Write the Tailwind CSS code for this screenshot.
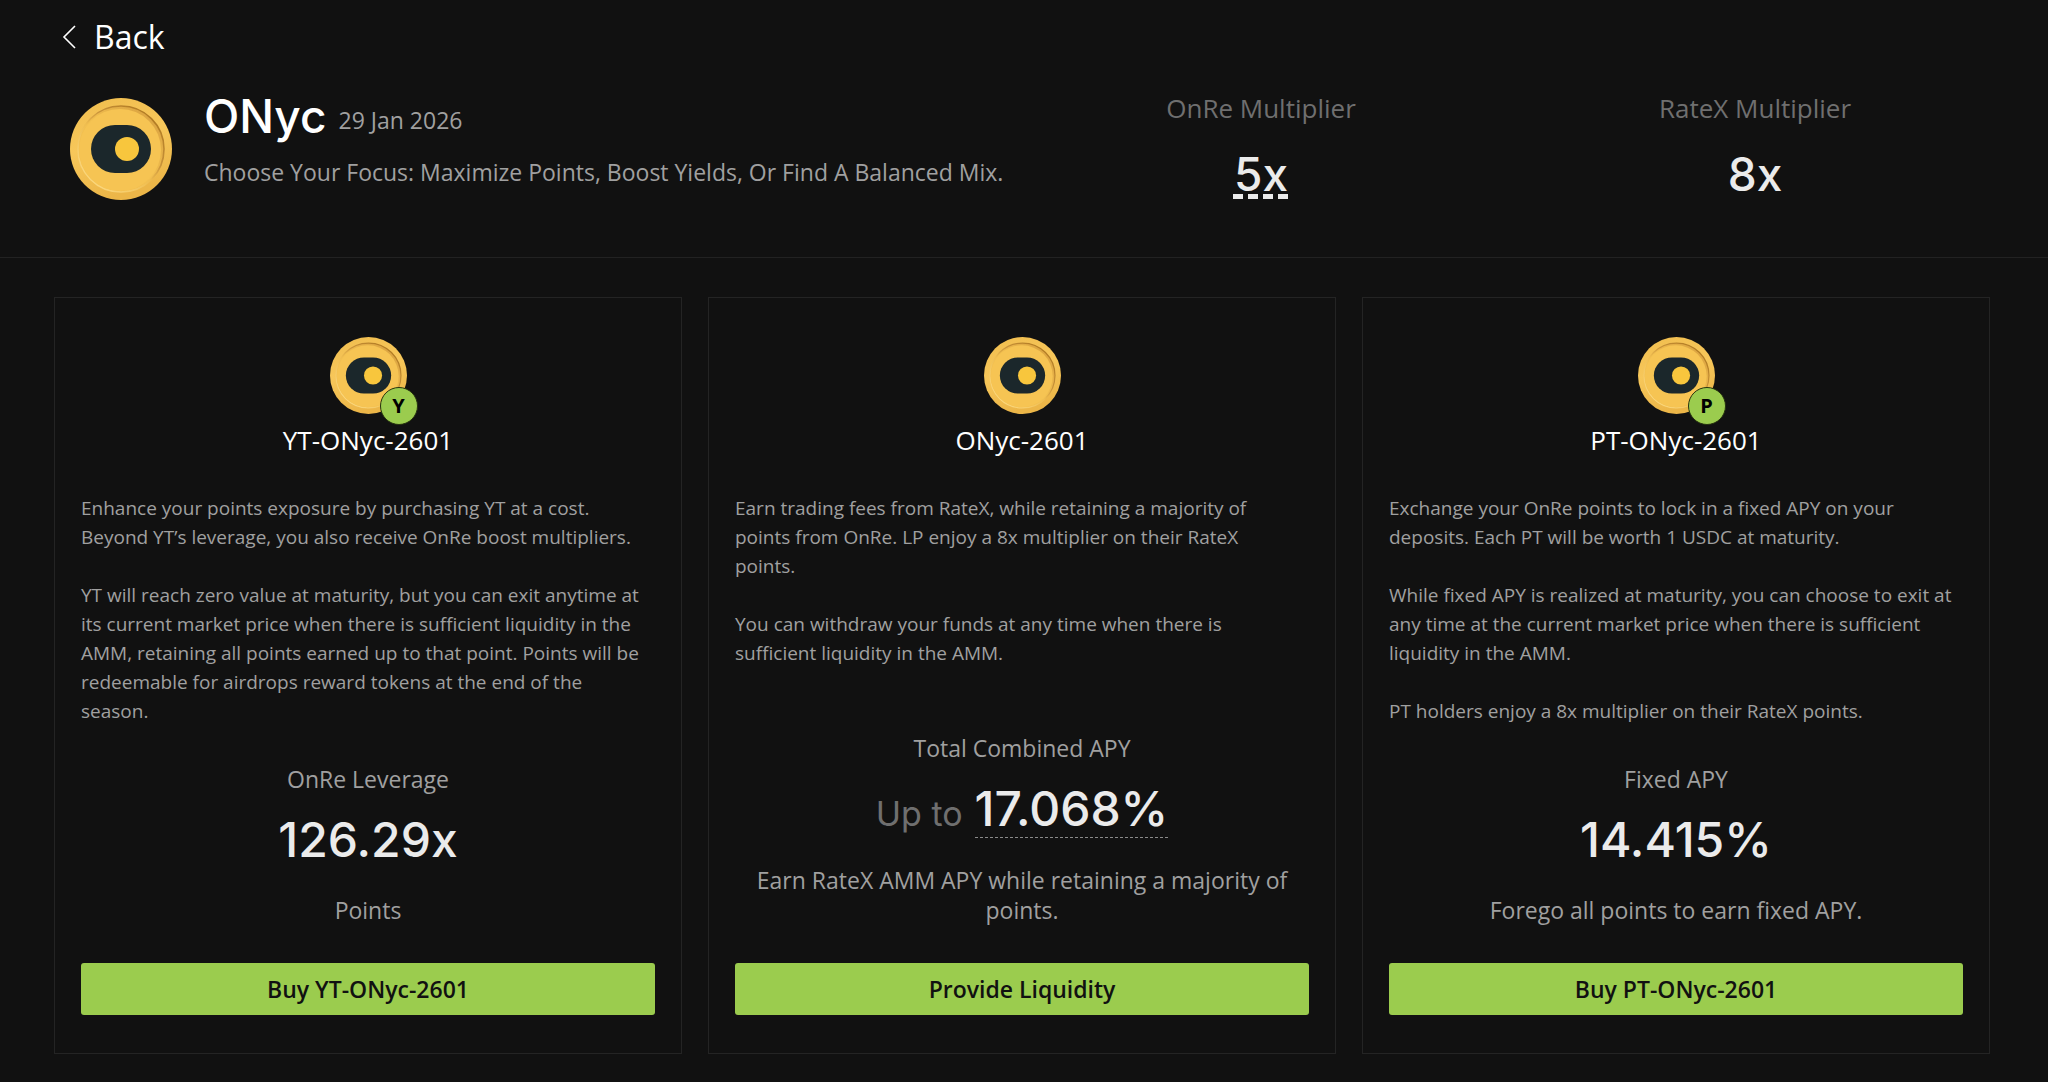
<!DOCTYPE html>
<html lang="en">
<head>
<meta charset="utf-8">
<meta name="viewport" content="width=device-width, initial-scale=1">
<title>ONyc</title>
<script src="https://cdn.jsdelivr.net/npm/@tailwindcss/browser@4"></script>
</head>
<body class="flex min-h-screen flex-col bg-[#111111] font-['Open_Sans','Noto_Sans',sans-serif] text-[#a0a0a0]">
<svg class="absolute h-0 w-0" aria-hidden="true">
  <defs>
    <linearGradient id="rim" x1="0" y1="0" x2="0.3" y2="1"><stop offset="0" stop-color="#f0bd4e"/><stop offset="0.5" stop-color="#f7c75a"/><stop offset="1" stop-color="#ecb648"/></linearGradient>
    <linearGradient id="groove" x1="0.85" y1="0.1" x2="0.15" y2="0.9"><stop offset="0" stop-color="#b07a22"/><stop offset="0.35" stop-color="#c8923a"/><stop offset="0.55" stop-color="#efbd50"/><stop offset="1" stop-color="#fbd87e"/></linearGradient>
    <linearGradient id="shade" x1="0.85" y1="0.1" x2="0.15" y2="0.9"><stop offset="0" stop-color="#dba442"/><stop offset="0.5" stop-color="#f2c050"/><stop offset="1" stop-color="#f3bd4c"/></linearGradient>
    <symbol id="coin" viewBox="0 0 102 102">
      <circle cx="51" cy="51" r="51" fill="url(#rim)"/>
      <circle cx="51" cy="51" r="43" fill="url(#shade)" stroke="url(#groove)" stroke-width="1.6"/>
      <circle cx="50" cy="52" r="41" fill="#f6c453"/>
      <rect x="21" y="27" width="60" height="48" rx="24" fill="#1b272b"/>
      <circle cx="57" cy="51" r="12" fill="#f8c63d"/>
    </symbol>
  </defs>
</svg>

<header class="border-b border-[#222222] pr-[46px] pb-[55px] pl-[54px]">
  <a href="#" class="inline-flex items-center gap-4 pt-4 pl-2 text-[32px] leading-[42px] text-white">
    <svg class="h-6 w-4" viewBox="0 0 16 24" fill="none" stroke="currentColor" stroke-width="1.6"><path d="M13 1 2 12l11 11"/></svg>
    Back
  </a>
  <div class="grid grid-cols-[960fr_494fr_494fr] pt-8">
    <div class="flex gap-8 pt-1 pl-4">
      <svg class="mt-1 h-[102px] w-[102px] shrink-0" role="img" aria-label="ONyc"><use href="#coin"/></svg>
      <div>
        <div class="flex items-start gap-3">
          <h1 class="font-['Inter',sans-serif] text-[46px] leading-[44px] font-medium text-white">ONyc</h1>
          <span class="text-[23px] leading-[52px]">29 Jan 2026</span>
        </div>
        <p class="mt-1.5 text-[23px] leading-10">Choose Your Focus: Maximize Points, Boost Yields, Or Find A Balanced Mix.</p>
      </div>
    </div>
    <div class="text-center">
      <div class="text-[26px] leading-9 text-[#6f6f6f]">OnRe Multiplier</div>
      <div class="mt-5 font-['Inter',sans-serif] text-[46px] leading-[56px] font-medium text-[#ebebeb] underline decoration-dashed decoration-[5px] underline-offset-[3px]">5x</div>
    </div>
    <div class="text-center">
      <div class="text-[26px] leading-9 text-[#6f6f6f]">RateX Multiplier</div>
      <div class="mt-5 font-['Inter',sans-serif] text-[46px] leading-[56px] font-medium text-[#ebebeb]">8x</div>
    </div>
  </div>
</header>

<main class="grid flex-1 grid-cols-3 gap-[26px] pt-[39px] pr-[58px] pb-7 pl-[54px]">
  <section class="flex flex-col border border-[#242424] px-[26px] pt-[39px] pb-[38px]">
    <div class="relative mx-auto h-[77px] w-[77px]">
      <svg class="h-full w-full" aria-hidden="true"><use href="#coin"/></svg>
      <span class="absolute -right-[11px] -bottom-[11px] flex h-[38px] w-[38px] items-center justify-center rounded-full border border-[#26330f] bg-[#9bcc4e] text-[20px] font-bold text-black">Y</span>
    </div>
    <h2 class="mt-1.5 text-center text-[26px] leading-10 text-white">YT-ONyc-2601</h2>
    <div class="mt-[34px] space-y-[29px] pr-2 text-[19px] leading-[29px]">
      <p>Enhance your points exposure by purchasing YT at a cost. Beyond YT’s leverage, you also receive OnRe boost multipliers.</p>
      <p>YT will reach zero value at maturity, but you can exit anytime at its current market price when there is sufficient liquidity in the AMM, retaining all points earned up to that point. Points will be redeemable for airdrops reward tokens at the end of the season.</p>
    </div>
    <div class="mt-auto pt-6 text-center text-[23px] leading-[30px]">
      <div>OnRe Leverage</div>
      <div class="mt-[18px] font-['Inter',sans-serif] text-[48px] leading-[56px] font-medium text-[#ebebeb]">126.29x</div>
      <div class="mt-[27px]">Points</div>
    </div>
    <button type="button" class="mt-[38px] h-[52px] w-full rounded-[3px] bg-[#9bcc4e] text-[23px] font-semibold text-[#111111]">Buy YT-ONyc-2601</button>
  </section>

  <section class="flex flex-col border border-[#242424] px-[26px] pt-[39px] pb-[38px]">
    <div class="relative mx-auto h-[77px] w-[77px]">
      <svg class="h-full w-full" aria-hidden="true"><use href="#coin"/></svg>
    </div>
    <h2 class="mt-1.5 text-center text-[26px] leading-10 text-white">ONyc-2601</h2>
    <div class="mt-[34px] space-y-[29px] pr-2 text-[19px] leading-[29px]">
      <p>Earn trading fees from RateX, while retaining a majority of points from OnRe. LP enjoy a 8x multiplier on their RateX points.</p>
      <p>You can withdraw your funds at any time when there is sufficient liquidity in the AMM.</p>
    </div>
    <div class="mt-auto pt-6 text-center text-[23px] leading-[30px]">
      <div>Total Combined APY</div>
      <div class="mt-[18px] flex items-baseline justify-center gap-3 font-['Inter',sans-serif]">
        <span class="text-[34px] text-[#6f6f6f]">Up to</span>
        <span class="border-b border-dashed border-[#8a8a8a] text-[48px] leading-[56px] font-medium text-[#ebebeb]">17.068%</span>
      </div>
      <div class="mt-[27px]">Earn RateX AMM APY while retaining a majority of points.</div>
    </div>
    <button type="button" class="mt-[38px] h-[52px] w-full rounded-[3px] bg-[#9bcc4e] text-[23px] font-semibold text-[#111111]">Provide Liquidity</button>
  </section>

  <section class="flex flex-col border border-[#242424] px-[26px] pt-[39px] pb-[38px]">
    <div class="relative mx-auto h-[77px] w-[77px]">
      <svg class="h-full w-full" aria-hidden="true"><use href="#coin"/></svg>
      <span class="absolute -right-[11px] -bottom-[11px] flex h-[38px] w-[38px] items-center justify-center rounded-full border border-[#26330f] bg-[#9bcc4e] text-[20px] font-bold text-black">P</span>
    </div>
    <h2 class="mt-1.5 text-center text-[26px] leading-10 text-white">PT-ONyc-2601</h2>
    <div class="mt-[34px] space-y-[29px] pr-2 text-[19px] leading-[29px]">
      <p>Exchange your OnRe points to lock in a fixed APY on your deposits. Each PT will be worth 1 USDC at maturity.</p>
      <p>While fixed APY is realized at maturity, you can choose to exit at any time at the current market price when there is sufficient liquidity in the AMM.</p>
      <p>PT holders enjoy a 8x multiplier on their RateX points.</p>
    </div>
    <div class="mt-auto pt-6 text-center text-[23px] leading-[30px]">
      <div>Fixed APY</div>
      <div class="mt-[18px] font-['Inter',sans-serif] text-[48px] leading-[56px] font-medium text-[#ebebeb]">14.415%</div>
      <div class="mt-[27px]">Forego all points to earn fixed APY.</div>
    </div>
    <button type="button" class="mt-[38px] h-[52px] w-full rounded-[3px] bg-[#9bcc4e] text-[23px] font-semibold text-[#111111]">Buy PT-ONyc-2601</button>
  </section>
</main>
</body>
</html>
